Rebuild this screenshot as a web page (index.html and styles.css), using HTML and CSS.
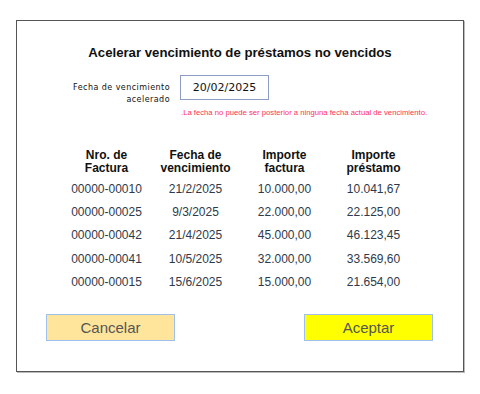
FILE: index.html
```html
<!DOCTYPE html>
<html lang="es">
<head>
<meta charset="utf-8">
<link rel="stylesheet" href="styles.css">
</head>
<body>
<div class="frame">
  <h1 class="title">Acelerar vencimiento de préstamos no vencidos</h1>
  <div class="form-row">
    <div class="label">Fecha de vencimiento<br>acelerado</div>
    <div class="date-box">20/02/2025</div>
    <div class="error">.La fecha no puede ser posterior a ninguna fecha actual de vencimiento.</div>
  </div>
  <table class="grid">
    <thead>
      <tr><th>Nro. de<br>Factura</th><th>Fecha de<br>vencimiento</th><th>Importe<br>factura</th><th>Importe<br>préstamo</th></tr>
    </thead>
    <tbody>
      <tr><td>00000-00010</td><td>21/2/2025</td><td>10.000,00</td><td>10.041,67</td></tr>
      <tr><td>00000-00025</td><td>9/3/2025</td><td>22.000,00</td><td>22.125,00</td></tr>
      <tr><td>00000-00042</td><td>21/4/2025</td><td>45.000,00</td><td>46.123,45</td></tr>
      <tr><td>00000-00041</td><td>10/5/2025</td><td>32.000,00</td><td>33.569,60</td></tr>
      <tr><td>00000-00015</td><td>15/6/2025</td><td>15.000,00</td><td>21.654,00</td></tr>
    </tbody>
  </table>
  <div class="actions">
    <button class="btn btn-cancel">Cancelar</button>
    <button class="btn btn-ok">Aceptar</button>
  </div>
</div>
</body>
</html>
```
FILE: styles.css
```css
html, body {
  margin: 0;
  padding: 0;
  background: #fff;
}
body {
  width: 480px;
  height: 394px;
  font-family: "Liberation Sans", Arial, sans-serif;
}
.frame {
  box-sizing: border-box;
  margin: 20px 0 0 16px;
  width: 448px;
  height: 352px;
  border: 1px solid #555;
  box-shadow: 1px 1px 0 #bbb;
  display: flex;
  flex-direction: column;
  align-items: stretch;
}
.title {
  margin: 24px 0 0 0;
  font-size: 13.2px;
  line-height: 16px;
  font-weight: bold;
  text-align: center;
  color: #111;
}
.form-row {
  margin-top: 14px;
  display: grid;
  grid-template-columns: 153px 89px;
  column-gap: 10px;
}
.label {
  font-family: "DejaVu Sans", sans-serif;
  font-size: 8px;
  line-height: 12px;
  letter-spacing: 0.45px;
  text-align: right;
  color: #111;
  padding-top: 7px;
}
.date-box {
  box-sizing: border-box;
  height: 25px;
  border: 1px solid #8c9cc4;
  font-family: "DejaVu Sans", sans-serif;
  font-size: 11px;
  line-height: 23px;
  text-align: center;
  color: #111;
}
.error {
  grid-column: 2;
  white-space: nowrap;
  margin-top: 2px;
  font-size: 7.7px;
  line-height: 10px;
  color: #ff2f5a;
  margin-left: 1px;
}
.grid {
  margin: 31px auto 0 auto;
  border-collapse: collapse;
  table-layout: fixed;
  width: 356px;
}
.grid th, .grid td {
  width: 89px;
  padding: 0;
  text-align: center;
  font-size: 12px;
}
.grid th {
  font-weight: bold;
  line-height: 13px;
  color: #111;
  padding-bottom: 2px;
}
.grid td {
  line-height: 14px;
  height: 23.3px;
  color: #2e3a4c;
}
.actions {
  margin-top: 21px;
  padding: 0 30px 0 29px;
  display: flex;
  justify-content: space-between;
}
.btn {
  box-sizing: border-box;
  width: 129px;
  height: 27px;
  border: 1px solid #9fc0ea;
  font-family: "Liberation Sans", Arial, sans-serif;
  font-size: 15px;
  color: #555;
  padding: 0;
}
.btn-cancel { background: #ffe49b; }
.btn-ok { background: #ffff00; }
```
